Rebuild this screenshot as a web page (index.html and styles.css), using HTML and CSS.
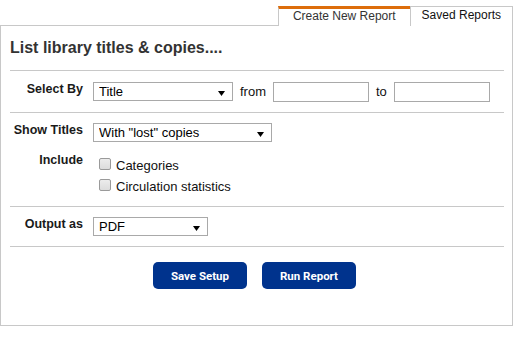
FILE: index.html
```html
<!DOCTYPE html>
<html>
<head>
<meta charset="utf-8">
<title>Create New Report</title>
<link rel="stylesheet" href="styles.css">
</head>
<body>
<div class="report">
  <div class="tabs">
    <div class="tabs-fill"></div>
    <div class="tab tab-active">Create New Report</div>
    <div class="tab tab-saved">Saved Reports</div>
  </div>
  <div class="panel">
    <h1 class="title">List library titles &amp; copies....</h1>

    <div class="section section-select">
      <div class="row">
        <label class="label">Select By</label>
        <div class="controls">
          <select class="select select-by"><option>Title</option></select>
          <span class="text">from</span>
          <input class="input" type="text">
          <span class="text">to</span>
          <input class="input" type="text">
        </div>
      </div>
    </div>

    <div class="section section-show">
      <div class="row">
        <label class="label">Show Titles</label>
        <div class="controls">
          <select class="select select-show"><option>With "lost" copies</option></select>
        </div>
      </div>
      <div class="row row-include">
        <label class="label">Include</label>
        <div class="checklist">
          <label class="check"><input type="checkbox" class="checkbox"><span>Categories</span></label>
          <label class="check"><input type="checkbox" class="checkbox"><span>Circulation statistics</span></label>
        </div>
      </div>
    </div>

    <div class="section section-output">
      <div class="row">
        <label class="label">Output as</label>
        <div class="controls">
          <select class="select select-output"><option>PDF</option></select>
        </div>
      </div>
    </div>

    <div class="section section-actions">
      <button class="btn" type="button">Save Setup</button>
      <button class="btn" type="button">Run Report</button>
    </div>
  </div>
</div>
</body>
</html>
```

FILE: styles.css
```css
* { box-sizing: border-box; }

html, body {
  margin: 0;
  padding: 0;
  background: #fff;
}

body {
  font-family: "Liberation Sans", Arial, sans-serif;
  font-size: 13px;
  color: #111;
}

.report {
  width: 513px;
  padding-top: 6px;
}

/* tabs */
.tabs {
  display: flex;
  height: 20px;
}

.tabs-fill {
  flex: 1;
  border-bottom: 1px solid #c8c8c8;
}

.tab {
  font-size: 12px;
  white-space: nowrap;
  text-align: center;
}

.tab-active {
  border-top: 3px solid #dd6d0b;
  border-left: 1px solid #c8c8c8;
  padding: 0 14px 3px;
  line-height: 14px;
  color: #333;
}

.tab-saved {
  border-top: 1px solid #c8c8c8;
  border-left: 1px solid #c8c8c8;
  border-right: 1px solid #c8c8c8;
  padding: 0 11px 3px;
  line-height: 16px;
  color: #111;
}

/* panel */
.panel {
  border: 1px solid #c8c8c8;
  border-top: none;
  padding: 0 8px 36px 9px;
}

.title {
  margin: 0;
  padding: 13px 0;
  font-size: 16px;
  line-height: 18px;
  font-weight: bold;
  color: #333;
}

.section {
  border-top: 1px solid #c8c8c8;
}

.section-select { padding: 11px 0 10px; }
.section-show { padding: 10px 0 7px; }
.section-output { padding: 10px 0 10px; }
.section-actions {
  padding: 15px 5px 0 0;
  display: flex;
  justify-content: center;
  gap: 15px;
}

.row {
  display: flex;
  align-items: flex-start;
}

.row-include {
  margin-top: 11px;
}

.label {
  width: 73px;
  margin-right: 10px;
  flex: none;
  text-align: right;
  font-weight: bold;
  font-size: 12.5px;
  line-height: 14px;
  color: #1a1a1a;
}

.controls {
  display: flex;
  align-items: flex-start;
}

.text {
  margin: 0 7px;
  line-height: 20px;
  color: #111;
}

.select {
  -webkit-appearance: none;
  appearance: none;
  height: 19px;
  margin: 0;
  border: 1px solid #a9a9a9;
  border-radius: 0;
  padding: 0 16px 0 5px;
  background: #fff url("data:image/svg+xml;utf8,<svg xmlns='http://www.w3.org/2000/svg' width='7' height='5'><path d='M0 0h7L3.5 5z' fill='%23000'/></svg>") no-repeat right 7px top 8px;
  font-family: "Liberation Sans", Arial, sans-serif;
  font-size: 13px;
  line-height: 17px;
  color: #000;
}

.select-by { width: 140px; }
.select-show { width: 179px; }
.select-output { width: 115px; }

.input {
  width: 96px;
  height: 20px;
  margin: 0;
  padding: 0 3px;
  border: 1px solid #a9a9a9;
  border-radius: 0;
  font-family: "Liberation Sans", Arial, sans-serif;
  font-size: 13px;
}

.checklist {
  padding-top: 4px;
}

.check {
  display: flex;
  align-items: flex-start;
  height: 21px;
  line-height: 18px;
  color: #111;
}

.checkbox {
  -webkit-appearance: none;
  appearance: none;
  width: 12px;
  height: 12px;
  margin: 1px 5px 0 6px;
  border: 1px solid #9a9a9a;
  border-radius: 2px;
  background: linear-gradient(#ececec, #dcdcdc);
}

.btn {
  width: 94px;
  height: 27px;
  border: none;
  border-radius: 5px;
  background: #00338d;
  color: #fff;
  font-family: Roboto, "Liberation Sans", sans-serif;
  font-weight: bold;
  font-size: 11.5px;
  padding: 0;
}
```
